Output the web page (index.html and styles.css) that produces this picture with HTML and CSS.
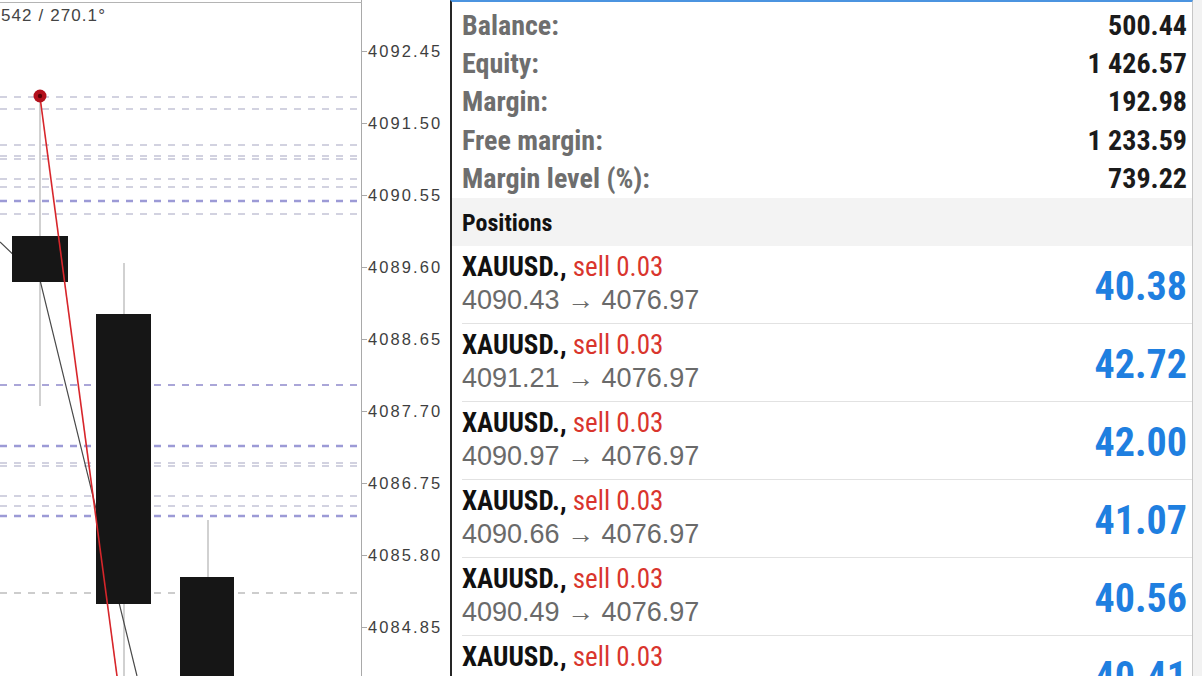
FILE: index.html
```html
<!DOCTYPE html>
<html lang="en">
<head>
    <meta charset="UTF-8">
    <meta name="viewport" content="width=device-width, initial-scale=1.0">
    <title>Trade</title>
    <link rel="stylesheet" href="styles.css">
</head>
<body>
    <div class="chart">
        <div class="plot">
            <div class="chart-title">542 / 270.1°</div>
            <svg class="plot-svg" width="362" height="676" viewBox="0 0 362 676">
                <line class="frame" x1="0" y1="2.5" x2="362" y2="2.5"/>
                <!-- order levels -->
                <g class="levels">
                    <line class="lv" x1="0" y1="97" x2="362" y2="97"/>
                    <line class="lv" x1="0" y1="109" x2="362" y2="109"/>
                    <line class="lv" x1="0" y1="145" x2="362" y2="145"/>
                    <line class="lv" x1="0" y1="156" x2="362" y2="156"/>
                    <line class="lv" x1="0" y1="159" x2="362" y2="159"/>
                    <line class="lv" x1="0" y1="179" x2="362" y2="179"/>
                    <line class="lv" x1="0" y1="187" x2="362" y2="187"/>
                    <line class="lv strong" x1="0" y1="201" x2="362" y2="201"/>
                    <line class="lv" x1="0" y1="214" x2="362" y2="214"/>
                    <line class="lv mid" x1="0" y1="385" x2="362" y2="385"/>
                    <line class="lv strong" x1="0" y1="446" x2="362" y2="446"/>
                    <line class="lv" x1="0" y1="463" x2="362" y2="463"/>
                    <line class="lv" x1="0" y1="466" x2="362" y2="466"/>
                    <line class="lv" x1="0" y1="496" x2="362" y2="496"/>
                    <line class="lv" x1="0" y1="506" x2="362" y2="506"/>
                    <line class="lv strong" x1="0" y1="516" x2="362" y2="516"/>
                    <line class="lv grey" x1="0" y1="593" x2="362" y2="593"/>
                </g>
                <!-- wicks -->
                <line class="wick" x1="40" y1="97" x2="40" y2="406"/>
                <line class="wick" x1="124" y1="263" x2="124" y2="676"/>
                <line class="wick" x1="208" y1="520" x2="208" y2="676"/>
                <polyline class="trend" points="0,242 40,280 137,676"/>
                <!-- candles -->
                <rect class="candle" x="12" y="236" width="56" height="46"/>
                <rect class="candle" x="96" y="314" width="55" height="290"/>
                <rect class="candle" x="180" y="577" width="54" height="110"/>
                <line class="deal" x1="40" y1="97" x2="117" y2="676"/>
                <circle class="deal-dot" cx="40" cy="96" r="6.5"/>
                <circle class="deal-dot-core" cx="40" cy="96" r="2.2"/>
            </svg>
        </div>
        <div class="axis">
            <div class="tick">4092.45</div>
            <div class="tick">4091.50</div>
            <div class="tick">4090.55</div>
            <div class="tick">4089.60</div>
            <div class="tick">4088.65</div>
            <div class="tick">4087.70</div>
            <div class="tick">4086.75</div>
            <div class="tick">4085.80</div>
            <div class="tick">4084.85</div>
        </div>
    </div>

    <div class="panel">
        <div class="summary">
            <div class="sum-row"><span class="sum-label">Balance:</span><span class="sum-value">500.44</span></div>
            <div class="sum-row"><span class="sum-label">Equity:</span><span class="sum-value">1 426.57</span></div>
            <div class="sum-row"><span class="sum-label">Margin:</span><span class="sum-value">192.98</span></div>
            <div class="sum-row"><span class="sum-label">Free margin:</span><span class="sum-value">1 233.59</span></div>
            <div class="sum-row"><span class="sum-label">Margin level (%):</span><span class="sum-value">739.22</span></div>
        </div>

        <div class="section-head">Positions</div>

        <div class="positions">
            <div class="pos">
                <div class="pos-info">
                    <div class="pos-title"><b>XAUUSD.,</b> <span class="sell">sell 0.03</span></div>
                    <div class="pos-price">4090.43 → 4076.97</div>
                </div>
                <div class="pos-profit">40.38</div>
            </div>
            <div class="pos">
                <div class="pos-info">
                    <div class="pos-title"><b>XAUUSD.,</b> <span class="sell">sell 0.03</span></div>
                    <div class="pos-price">4091.21 → 4076.97</div>
                </div>
                <div class="pos-profit">42.72</div>
            </div>
            <div class="pos">
                <div class="pos-info">
                    <div class="pos-title"><b>XAUUSD.,</b> <span class="sell">sell 0.03</span></div>
                    <div class="pos-price">4090.97 → 4076.97</div>
                </div>
                <div class="pos-profit">42.00</div>
            </div>
            <div class="pos">
                <div class="pos-info">
                    <div class="pos-title"><b>XAUUSD.,</b> <span class="sell">sell 0.03</span></div>
                    <div class="pos-price">4090.66 → 4076.97</div>
                </div>
                <div class="pos-profit">41.07</div>
            </div>
            <div class="pos">
                <div class="pos-info">
                    <div class="pos-title"><b>XAUUSD.,</b> <span class="sell">sell 0.03</span></div>
                    <div class="pos-price">4090.49 → 4076.97</div>
                </div>
                <div class="pos-profit">40.56</div>
            </div>
            <div class="pos">
                <div class="pos-info">
                    <div class="pos-title"><b>XAUUSD.,</b> <span class="sell">sell 0.03</span></div>
                    <div class="pos-price">4090.81 → 4076.97</div>
                </div>
                <div class="pos-profit">40.41</div>
            </div>
        </div>
    </div>

    <div class="edge"></div>
</body>
</html>
```
FILE: styles.css
```css
* {
    margin: 0;
    padding: 0;
    box-sizing: border-box;
}

body {
    width: 1202px;
    height: 676px;
    overflow: hidden;
    display: flex;
    background: #fff;
    font-family: "Roboto Condensed", "Roboto", sans-serif;
}

/* chart */
.chart {
    width: 450px;
    height: 676px;
    display: flex;
    flex-shrink: 0;
}

.plot {
    width: 362px;
    height: 676px;
    position: relative;
    border-right: 1px solid #a9a9a9;
}

.plot-svg {
    display: block;
}

.chart-title {
    position: absolute;
    top: 6px;
    left: 1px;
    font-family: "Liberation Sans", Arial, sans-serif;
    font-size: 17px;
    letter-spacing: 1.1px;
    color: #444;
}

.frame {
    stroke: #b4b4b4;
    stroke-width: 1;
}

.lv {
    stroke: #c4c4d6;
    stroke-width: 1.4;
    stroke-dasharray: 7 7;
}

.lv.mid {
    stroke: #aaa6d8;
    stroke-width: 1.8;
}

.lv.strong {
    stroke: #9c9ad6;
    stroke-width: 2.4;
}

.lv.grey {
    stroke: #bdbdbd;
}

.wick {
    stroke: #b9b9b9;
    stroke-width: 1.3;
}

.trend {
    fill: none;
    stroke: #4a4a4a;
    stroke-width: 1.2;
}

.candle {
    fill: #161616;
}

.deal {
    stroke: #d7262b;
    stroke-width: 1.6;
}

.deal-dot {
    fill: #b3101c;
}

.deal-dot-core {
    fill: #5a0008;
}

.axis {
    flex: 1;
    padding-top: 16px;
}

.tick {
    height: 71.9px;
    display: flex;
    align-items: center;
    font-family: "Liberation Sans", Arial, sans-serif;
    font-size: 16.5px;
    letter-spacing: 2.1px;
    color: #3e3e3e;
}

.tick::before {
    content: "";
    width: 5px;
    height: 1px;
    background: #a9a9a9;
    margin-right: 1px;
}

/* account panel */
.panel {
    width: 743px;
    height: 676px;
    flex-shrink: 0;
    border-left: 2px solid #262626;
    border-top: 2px solid #4b94e0;
    border-right: 1px solid #c6c6c6;
    overflow: hidden;
}

.summary {
    padding-top: 4px;
}

.sum-row {
    height: 38.4px;
    display: flex;
    align-items: center;
    justify-content: space-between;
    padding: 0 5px 0 10px;
    font-size: 28px;
    font-weight: 700;
}

.sum-label {
    color: #6e6e6e;
}

.sum-value {
    color: #1b1b1b;
}

.section-head {
    height: 48px;
    display: flex;
    align-items: center;
    padding: 3px 10px 0;
    background: #f3f3f3;
    font-size: 24px;
    font-weight: 700;
    color: #121212;
}

.positions {
    margin-left: 10px;
}

.pos {
    height: 78px;
    display: flex;
    justify-content: space-between;
    align-items: flex-start;
    padding: 6px 5px 0 0;
    border-bottom: 1px solid #e2e2e2;
}

.pos-title {
    height: 30px;
    line-height: 30px;
    font-size: 27px;
    color: #111;
}

.pos-title b {
    font-weight: 700;
}

.sell {
    color: #d9352d;
}

.pos-price {
    height: 36px;
    line-height: 36px;
    font-family: "Liberation Sans", Arial, sans-serif;
    font-size: 27px;
    color: #6a6a6a;
}

.pos-profit {
    margin-top: 15px;
    line-height: 40px;
    font-size: 40px;
    font-weight: 700;
    color: #1f7fe0;
}

.edge {
    flex: 1;
    background: #f2f2f2;
}
```
